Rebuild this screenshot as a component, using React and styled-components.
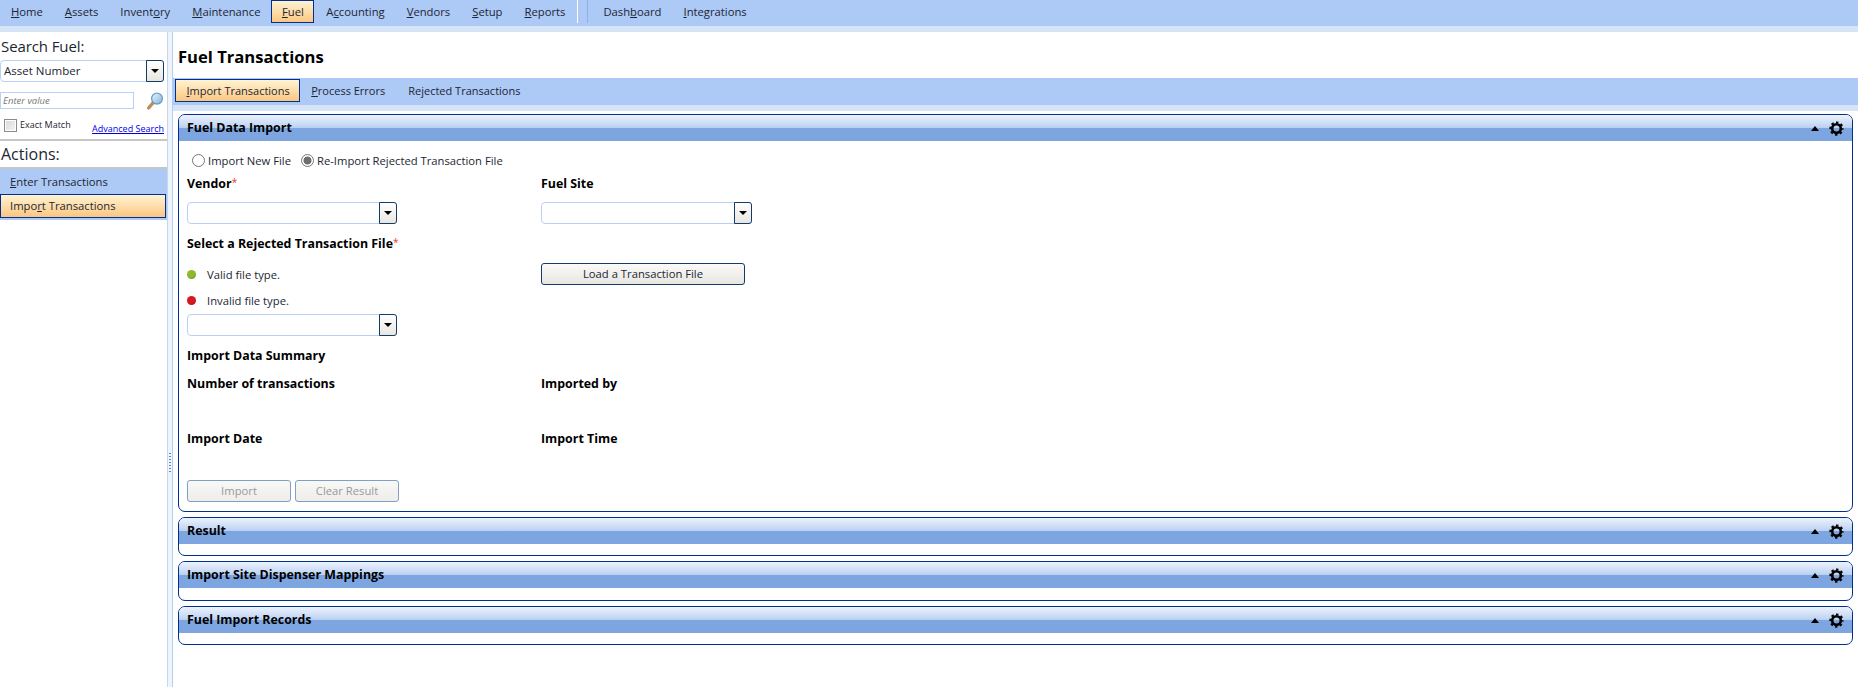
import React from 'react'
import styled, { createGlobalStyle } from 'styled-components'

const panels = [
  { title: 'Result' },
  { title: 'Import Site Dispenser Mappings', tall: true },
  { title: 'Fuel Import Records' },
]

const App = () => (
  <Page>
    <GlobalStyle />
    <MenuBar>
      <MenuItem><u>H</u>ome</MenuItem>
      <MenuItem><u>A</u>ssets</MenuItem>
      <MenuItem>Invent<u>o</u>ry</MenuItem>
      <MenuItem><u>M</u>aintenance</MenuItem>
      <MenuItem $active><u>F</u>uel</MenuItem>
      <MenuItem>A<u>c</u>counting</MenuItem>
      <MenuItem><u>V</u>endors</MenuItem>
      <MenuItem><u>S</u>etup</MenuItem>
      <MenuItem><u>R</u>eports</MenuItem>
      <MenuSeparator />
      <MenuItem>Dash<u>b</u>oard</MenuItem>
      <MenuItem><u>I</u>ntegrations</MenuItem>
    </MenuBar>

    <Body>
      <Sidebar>
        <SideHeading>Search Fuel:</SideHeading>
        <SideSelect><SelectText>Asset Number</SelectText><DropButton /></SideSelect>
        <SearchRow>
          <SearchInput>Enter value</SearchInput>
          <MagnifierIcon />
        </SearchRow>
        <ExactRow>
          <CheckBox />
          <ExactLabel>Exact Match</ExactLabel>
          <AdvancedLink>Advanced Search</AdvancedLink>
        </ExactRow>
        <ActionsHeading>Actions:</ActionsHeading>
        <ActionList>
          <ActionItem><u>E</u>nter Transactions</ActionItem>
          <ActionItem $active>Impo<u>r</u>t Transactions</ActionItem>
        </ActionList>
      </Sidebar>

      <Splitter><Grip /></Splitter>

      <Main>
        <PageTitle>Fuel Transactions</PageTitle>
        <TabBar>
          <Tab $active><u>I</u>mport Transactions</Tab>
          <Tab><u>P</u>rocess Errors</Tab>
          <Tab>Re<u>j</u>ected Transactions</Tab>
        </TabBar>

        <Panels>
          <Panel>
            <PanelHeader title="Fuel Data Import" />
            <PanelBody>
              <RadioRow>
                <Radio /><RadioLabel>Import New File</RadioLabel>
                <Radio $checked /><RadioLabel>Re-Import Rejected Transaction File</RadioLabel>
              </RadioRow>

              <FormGrid>
                <FieldLabel>Vendor<Required>*</Required></FieldLabel>
                <FieldLabel>Fuel Site</FieldLabel>
                <FormSelect><DropButton /></FormSelect>
                <FormSelect $wide><DropButton /></FormSelect>
              </FormGrid>

              <FileGrid>
                <div>
                  <FileLabel>Select a Rejected Transaction File<Required>*</Required></FileLabel>
                  <LegendRow $first><LegendDot $color="#8dbb2c" $shade="#5f8a12" />Valid file type.</LegendRow>
                  <LegendRow><LegendDot $color="#d8181f" $shade="#9c0d12" />Invalid file type.</LegendRow>
                  <FormSelect><DropButton /></FormSelect>
                </div>
                <LoadButton>Load a Transaction File</LoadButton>
              </FileGrid>

              <SummaryTitle>Import Data Summary</SummaryTitle>
              <SummaryGrid>
                <SummaryLabel>Number of transactions</SummaryLabel>
                <SummaryLabel>Imported by</SummaryLabel>
                <SummaryLabel>Import Date</SummaryLabel>
                <SummaryLabel>Import Time</SummaryLabel>
              </SummaryGrid>

              <ButtonRow>
                <DisabledButton>Import</DisabledButton>
                <DisabledButton>Clear Result</DisabledButton>
              </ButtonRow>
            </PanelBody>
          </Panel>

          {panels.map(({ title, tall }) => (
            <Panel key={title}>
              <PanelHeader title={title} />
              <EmptyBody $tall={tall} />
            </Panel>
          ))}
        </Panels>
      </Main>
    </Body>
  </Page>
)

export default App

const PanelHeader = ({ title }) => (
  <Header>
    <HeaderTitle>{title}</HeaderTitle>
    <CollapseArrow />
    <GearIcon />
  </Header>
)

const GearIcon = () => (
  <GearSvg viewBox="0 0 16 16" width="15" height="15">
    <circle cx="8" cy="8" r="4.6" fill="none" stroke="#000" strokeWidth="2.8" />
    <circle cx="8" cy="8" r="6.6" fill="none" stroke="#000" strokeWidth="2" strokeDasharray="2.6 2.58" strokeDashoffset="1.3" />
  </GearSvg>
)

const MagnifierIcon = () => (
  <MagnifierSvg viewBox="0 0 17 19" width="17" height="19">
    <defs>
      <linearGradient id="glass" x1="0" y1="0" x2="1" y2="1">
        <stop offset="0" stopColor="#eef6fd" />
        <stop offset="1" stopColor="#7fb2dc" />
      </linearGradient>
    </defs>
    <path d="M6.2 10.6 L1.6 16" stroke="#b98f52" strokeWidth="3.2" strokeLinecap="round" />
    <circle cx="10" cy="6.6" r="5.4" fill="url(#glass)" stroke="#6f9cc4" strokeWidth="1.3" />
  </MagnifierSvg>
)

const GlobalStyle = createGlobalStyle`
  html, body {
    margin: 0;
    padding: 0;
    background: #fff;
  }
  body {
    font-family: "Open Sans", "Liberation Sans", sans-serif;
    font-size: 11.25px;
    color: #1c2633;
  }
  u {
    text-underline-offset: 1px;
  }
`

const Page = styled.div`
  height: 687px;
  overflow: hidden;
  display: flex;
  flex-direction: column;
`

// Top menu
const MenuBar = styled.div`
  height: 26px;
  display: flex;
  align-items: flex-start;
  background: #adc9f6;
  border-bottom: 6px solid #d5e4f7;
  flex-shrink: 0;
`

const MenuItem = styled.div`
  height: 23px;
  line-height: 23px;
  padding: 0 11px;
  box-sizing: border-box;
  white-space: nowrap;
  ${(p) => p.$active && `
    border: 1px solid #00308f;
    line-height: 22px;
    padding: 0 9.5px;
    margin: 0 1px 0 0;
    background: linear-gradient(#fff3d2, #fdd9a2 60%, #fbc680);
  `}
`

const MenuSeparator = styled.div`
  width: 9px;
  height: 23px;
  margin: 0 4px 0 1px;
  border-left: 1px solid #fff;
  border-right: 1px solid #8fb0e2;
  box-sizing: content-box;
`

const Body = styled.div`
  flex: 1;
  display: flex;
  min-height: 0;
`

// Sidebar
const Sidebar = styled.div`
  width: 167px;
  flex-shrink: 0;
  display: flex;
  flex-direction: column;
`

const SideHeading = styled.div`
  font-size: 15px;
  letter-spacing: -0.1px;
  line-height: 22px;
  margin-top: 3px;
  padding-left: 1px;
`

const BaseSelect = styled.div`
  display: flex;
  justify-content: flex-end;
  box-sizing: border-box;
  background: #fff;
  border: 1px solid #b9d1f3;
  border-radius: 4px;
  height: 22px;
`

const SideSelect = styled(BaseSelect)`
  width: 164px;
  margin-top: 3px;
  justify-content: space-between;
`

const SelectText = styled.div`
  font-size: 11.5px;
  line-height: 20px;
  padding-left: 3px;
`

const DropButton = styled.div`
  width: 18px;
  height: 22px;
  margin: -1px -1px 0 0;
  box-sizing: border-box;
  flex-shrink: 0;
  border: 1px solid #123a6b;
  border-radius: 0 3px 3px 0;
  background: linear-gradient(#fff, #e9e6df);
  display: flex;
  align-items: center;
  justify-content: center;
  &::after {
    content: '';
    border-left: 4px solid transparent;
    border-right: 4px solid transparent;
    border-top: 4px solid #000;
  }
`

const SearchRow = styled.div`
  display: flex;
  align-items: center;
  margin-top: 9px;
  height: 18px;
`

const SearchInput = styled.div`
  width: 134px;
  height: 17px;
  box-sizing: border-box;
  border: 1px solid #b9d1f3;
  font-size: 9.5px;
  line-height: 15px;
  font-style: italic;
  color: #777;
  padding-left: 2px;
`

const MagnifierSvg = styled.svg`
  margin-left: 13px;
  margin-top: 2px;
`

const ExactRow = styled.div`
  display: flex;
  align-items: flex-start;
  margin-top: 10px;
  height: 21px;
  padding-left: 4px;
  width: 160px;
`

const CheckBox = styled.div`
  width: 13px;
  height: 13px;
  box-sizing: border-box;
  border: 1px solid #8b8b8b;
  background: linear-gradient(135deg, #d9d9d9, #f4f4f4);
  box-shadow: inset 0 0 0 1px #fff;
`

const ExactLabel = styled.div`
  font-size: 9px;
  line-height: 11px;
  margin-left: 3px;
`

const AdvancedLink = styled.a`
  margin-left: auto;
  margin-top: 3px;
  font-size: 9px;
  line-height: 13px;
  color: #0000e6;
  text-decoration: underline;
  white-space: nowrap;
`

const ActionsHeading = styled.div`
  font-size: 16px;
  line-height: 27px;
  padding-left: 1px;
  border-top: 2px solid #c6c6c6;
  border-bottom: 2px solid #c6c6c6;
  margin-top: -1px;
  height: 26px;
`

const ActionList = styled.div`
  background: #adc9f6;
  padding-bottom: 2px;
`

const ActionItem = styled.div`
  height: 25px;
  line-height: 25px;
  padding-left: 10px;
  box-sizing: border-box;
  ${(p) => p.$active && `
    height: 24px;
    line-height: 22px;
    padding-left: 9px;
    margin-right: 1px;
    border: 1px solid #00308f;
    background: linear-gradient(#fff3d2, #fdd9a2 60%, #fbc680);
  `}
`

const Splitter = styled.div`
  width: 6px;
  flex-shrink: 0;
  box-sizing: border-box;
  border-left: 1px solid #c9d6e6;
  border-right: 1px solid #b4cdf5;
  background: #eef4fc;
  padding-top: 421px;
`

const Grip = styled.div`
  width: 2px;
  height: 20px;
  margin-left: 1px;
  background: repeating-linear-gradient(#5e86c8 0 1px, transparent 1px 3px);
`

// Main content
const Main = styled.div`
  flex: 1;
  min-width: 0;
  display: flex;
  flex-direction: column;
`

const PageTitle = styled.h1`
  margin: 0;
  height: 46px;
  padding: 13px 0 0 5px;
  box-sizing: border-box;
  font-size: 16.6px;
  line-height: 24px;
  font-weight: 700;
  color: #000;
`

const TabBar = styled.div`
  height: 26px;
  display: flex;
  align-items: flex-start;
  padding: 1px 0 0 2px;
  background: #adc9f6;
  border-bottom: 6px solid #d5e4f7;
`

const Tab = styled.div`
  height: 23px;
  line-height: 22px;
  padding: 0 ${(p) => (p.$active ? '9px' : '10.5px')} 0 10.5px;
  box-sizing: border-box;
  border: 1px solid transparent;
  white-space: nowrap;
  font-size: 11px;
  ${(p) => p.$active && `
    border-color: #00308f;
    background: linear-gradient(#fff3d2, #fdd9a2 60%, #fbc680);
  `}
`

const Panels = styled.div`
  margin: 3px 5px 0 5px;
  display: flex;
  flex-direction: column;
  gap: 5px;
`

const Panel = styled.section`
  border: 1px solid #00308f;
  border-radius: 7px;
  background: #fff;
  overflow: hidden;
`

const Header = styled.header`
  height: 26px;
  display: flex;
  align-items: center;
  padding: 0 8px 0 8px;
  background: linear-gradient(#edf3fc 0, #bcd2f3 48%, #7da6e0 50%, #7da6e0 100%);
`

const HeaderTitle = styled.div`
  font-size: 12.4px;
  font-weight: 700;
  line-height: 22px;
  margin-bottom: 1px;
  color: #000;
  flex: 1;
`

const CollapseArrow = styled.div`
  border-left: 4px solid transparent;
  border-right: 4px solid transparent;
  border-bottom: 5px solid #000;
  margin: 0 10px 0 0;
`

const GearSvg = styled.svg`
  display: block;
`

const EmptyBody = styled.div`
  height: ${(p) => (p.$tall ? '12px' : '11px')};
`

const PanelBody = styled.div`
  height: 370px;
  box-sizing: border-box;
  padding: 11px 0 0 8px;
  display: flex;
  flex-direction: column;
`

const RadioRow = styled.div`
  display: flex;
  align-items: center;
  height: 16px;
  padding-left: 5px;
`

const Radio = styled.div`
  width: 13px;
  height: 13px;
  box-sizing: border-box;
  border: 1px solid #777;
  border-radius: 50%;
  background: #fff;
  margin-right: 3px;
  ${(p) => p.$checked && `
    background: radial-gradient(circle, #6e6e6e 0 3.6px, #fff 4.4px);
  `}
`

const RadioLabel = styled.div`
  margin-right: 10px;
  white-space: nowrap;
`

const FormGrid = styled.div`
  display: grid;
  grid-template-columns: 354px 220px;
  margin-top: 5px;
`

const FieldLabel = styled.div`
  font-size: 12.4px;
  font-weight: 700;
  color: #000;
  line-height: 20px;
  height: 29px;
  padding-top: 1px;
  box-sizing: border-box;
`

const Required = styled.span`
  color: #f0303a;
  font-size: 10px;
  line-height: 0;
  font-weight: 400;
  vertical-align: 2px;
`

const FormSelect = styled(BaseSelect)`
  width: ${(p) => (p.$wide ? '211px' : '210px')};
`

const FileGrid = styled.div`
  display: grid;
  grid-template-columns: 354px 220px;
`

const FileLabel = styled.div`
  font-size: 12.4px;
  font-weight: 700;
  color: #000;
  line-height: 20px;
  margin-top: 10px;
  white-space: nowrap;
`

const LegendRow = styled.div`
  display: flex;
  align-items: center;
  height: 26px;
  margin-top: ${(p) => (p.$first ? '7px' : '0')};
  margin-bottom: ${(p) => (p.$first ? '0' : '1px')};
`

const LegendDot = styled.span`
  width: 9px;
  height: 9px;
  border-radius: 50%;
  margin-right: 11px;
  background: radial-gradient(circle at 40% 35%, ${(p) => p.$color} 45%, ${(p) => p.$shade});
`

const LoadButton = styled.div`
  width: 204px;
  height: 22px;
  margin-top: 39px;
  box-sizing: border-box;
  border: 1px solid #123a6b;
  border-radius: 3px;
  background: linear-gradient(#fbfaf8, #e8e6e1);
  text-align: center;
  line-height: 20px;
`

const SummaryTitle = styled.div`
  font-size: 12.4px;
  font-weight: 700;
  color: #000;
  line-height: 20px;
  margin-top: 10px;
`

const SummaryGrid = styled.div`
  display: grid;
  grid-template-columns: 354px 220px;
  grid-template-rows: 55px 48px;
  margin-top: 8px;
`

const SummaryLabel = styled.div`
  font-size: 12.4px;
  font-weight: 700;
  color: #000;
  line-height: 20px;
`

const ButtonRow = styled.div`
  display: flex;
  gap: 4px;
  margin-top: 3px;
`

const DisabledButton = styled.div`
  width: 104px;
  height: 22px;
  box-sizing: border-box;
  border: 1px solid #7f9fc4;
  border-radius: 3px;
  background: linear-gradient(#f8f8f6, #eeedea);
  text-align: center;
  line-height: 20px;
  color: #999;
`
